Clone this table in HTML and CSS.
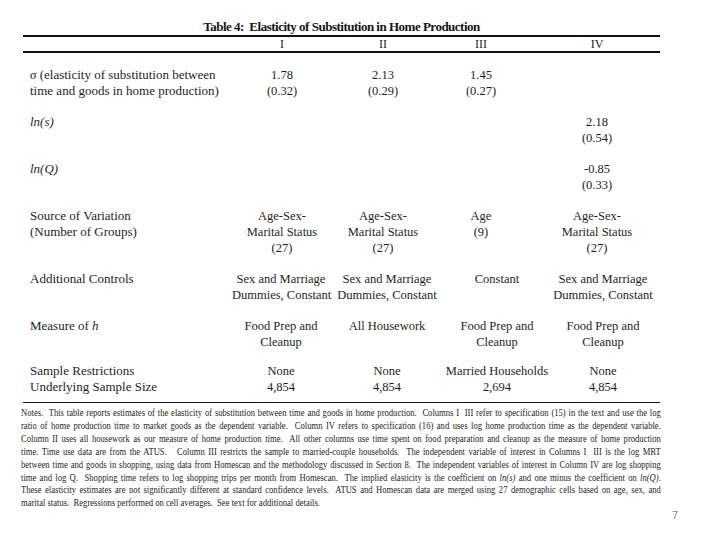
FILE: index.html
```html
<!DOCTYPE html>
<html lang="en">
<head>
<meta charset="utf-8">
<title>Table 4: Elasticity of Substitution in Home Production</title>
<link rel="stylesheet" href="styles.css">
</head>
<body>
<div class="sheet">
  <h1 class="title">Table 4:&nbsp; Elasticity of Substitution in Home Production</h1>
  <div class="table">
    <div class="row head">
      <div class="label"></div>
      <div class="cell">I</div>
      <div class="cell">II</div>
      <div class="cell">III</div>
      <div class="cell">IV</div>
    </div>
    <div class="body">
      <div class="row">
        <div class="label"><i>σ</i> (elasticity of substitution between<br>time and goods in home production)</div>
        <div class="cell">1.78<br>(0.32)</div>
        <div class="cell">2.13<br>(0.29)</div>
        <div class="cell">1.45<br>(0.27)</div>
        <div class="cell"></div>
      </div>
      <div class="row">
        <div class="label"><i>ln(s)</i></div>
        <div class="cell"></div>
        <div class="cell"></div>
        <div class="cell"></div>
        <div class="cell">2.18<br>(0.54)</div>
      </div>
      <div class="row">
        <div class="label"><i>ln(Q)</i></div>
        <div class="cell"></div>
        <div class="cell"></div>
        <div class="cell"></div>
        <div class="cell">-0.85<br>(0.33)</div>
      </div>
      <div class="row">
        <div class="label">Source of Variation<br>(Number of Groups)</div>
        <div class="cell">Age-Sex-<br>Marital Status<br>(27)</div>
        <div class="cell">Age-Sex-<br>Marital Status<br>(27)</div>
        <div class="cell">Age<br>(9)</div>
        <div class="cell">Age-Sex-<br>Marital Status<br>(27)</div>
      </div>
      <div class="row lower">
        <div class="label">Additional Controls</div>
        <div class="cell">Sex and Marriage<br>Dummies, Constant</div>
        <div class="cell">Sex and Marriage<br>Dummies, Constant</div>
        <div class="cell">Constant</div>
        <div class="cell">Sex and Marriage<br>Dummies, Constant</div>
      </div>
      <div class="row lower">
        <div class="label">Measure of <i>h</i></div>
        <div class="cell">Food Prep and<br>Cleanup</div>
        <div class="cell">All Housework</div>
        <div class="cell">Food Prep and<br>Cleanup</div>
        <div class="cell">Food Prep and<br>Cleanup</div>
      </div>
      <div class="row lower last-row">
        <div class="label">Sample Restrictions<br>Underlying Sample Size</div>
        <div class="cell">None<br>4,854</div>
        <div class="cell">None<br>4,854</div>
        <div class="cell">Married Households<br>2,694</div>
        <div class="cell">None<br>4,854</div>
      </div>
    </div>
  </div>
  <div class="notes">
    <div class="notes-inner">
      <div class="line">Notes.&nbsp; This table reports estimates of the elasticity of substitution between time and goods in home production.&nbsp; Columns I&nbsp; III refer to specification (15) in the text and use the log</div>
      <div class="line">ratio of home production time to market goods as the dependent variable.&nbsp; Column IV refers to specification (16) and uses log home production time as the dependent variable.</div>
      <div class="line">Column II uses all housework as our measure of home production time.&nbsp; All other columns use time spent on food preparation and cleanup as the measure of home production</div>
      <div class="line">time. Time use data are from the ATUS.&nbsp;&nbsp; Column III restricts the sample to married-couple households.&nbsp; The independent variable of interest in Columns I&nbsp; III is the log MRT</div>
      <div class="line">between time and goods in shopping, using data from Homescan and the methodology discussed in Section 8.&nbsp; The independent variables of interest in Column IV are log shopping</div>
      <div class="line">time and log Q.&nbsp; Shopping time refers to log shopping trips per month from Homescan.&nbsp; The implied elasticity is the coefficient on <i>ln(s)</i> and one minus the coefficient on <i>ln(Q)</i>.</div>
      <div class="line">These elasticity estimates are not significantly different at standard confidence levels.&nbsp; ATUS and Homescan data are merged using 27 demographic cells based on age, sex, and</div>
      <div class="line last">marital status.&nbsp; Regressions performed on cell averages.&nbsp; See text for additional details.</div>
    </div>
  </div>
  <div class="pagenum">7</div>
</div>
</body>
</html>
```

FILE: styles.css
```css
html, body {
  margin: 0;
  padding: 0;
  background: #ffffff;
}

body {
  color: #1e1e1e;
  font-family: "Liberation Serif", "Times New Roman", serif;
}

.sheet {
  width: 637px;
  margin-left: 23px;
  padding-top: 19px;
}

.title {
  margin: 0;
  font-size: 13px;
  line-height: 16px;
  font-weight: bold;
  text-align: center;
  letter-spacing: -0.5px;
  color: #151515;
}

.table {
  border-top: 2px solid #111111;
}

.row {
  display: grid;
  grid-template-columns: 209px 100px 102px 94px 138px;
  font-size: 13px;
  line-height: 16px;
}

.row.lower {
  grid-template-columns: 209px 98px 114px 106px 106px;
}

.head {
  font-size: 12px;
  line-height: 14px;
  border-bottom: 2px solid #111111;
}

.label {
  padding-left: 7px;
  white-space: nowrap;
}

.cell {
  text-align: center;
  white-space: nowrap;
  font-size: 12.5px;
}

.head .cell {
  font-size: 12px;
}

.body {
  display: flex;
  flex-direction: column;
  gap: 15px;
  padding-top: 14px;
}

.row.last-row {
  margin-top: -2px;
}

.notes {
  margin-top: 7px;
  border-top: 1.5px solid #111111;
  padding-top: 4px;
}

.notes-inner {
  width: 744px;
  margin-left: -2px;
  font-size: 10px;
  line-height: 12.9px;
  transform: scaleX(0.86);
  transform-origin: left top;
  color: #262626;
}

.line {
  text-align: justify;
  text-align-last: justify;
  white-space: nowrap;
}

.line.last {
  text-align-last: left;
}

.pagenum {
  margin-left: 646px;
  width: 12px;
  margin-top: -1px;
  text-align: center;
  font-family: "Liberation Sans", Arial, sans-serif;
  font-size: 11px;
  line-height: 13px;
  color: #8a8a8a;
}
```
